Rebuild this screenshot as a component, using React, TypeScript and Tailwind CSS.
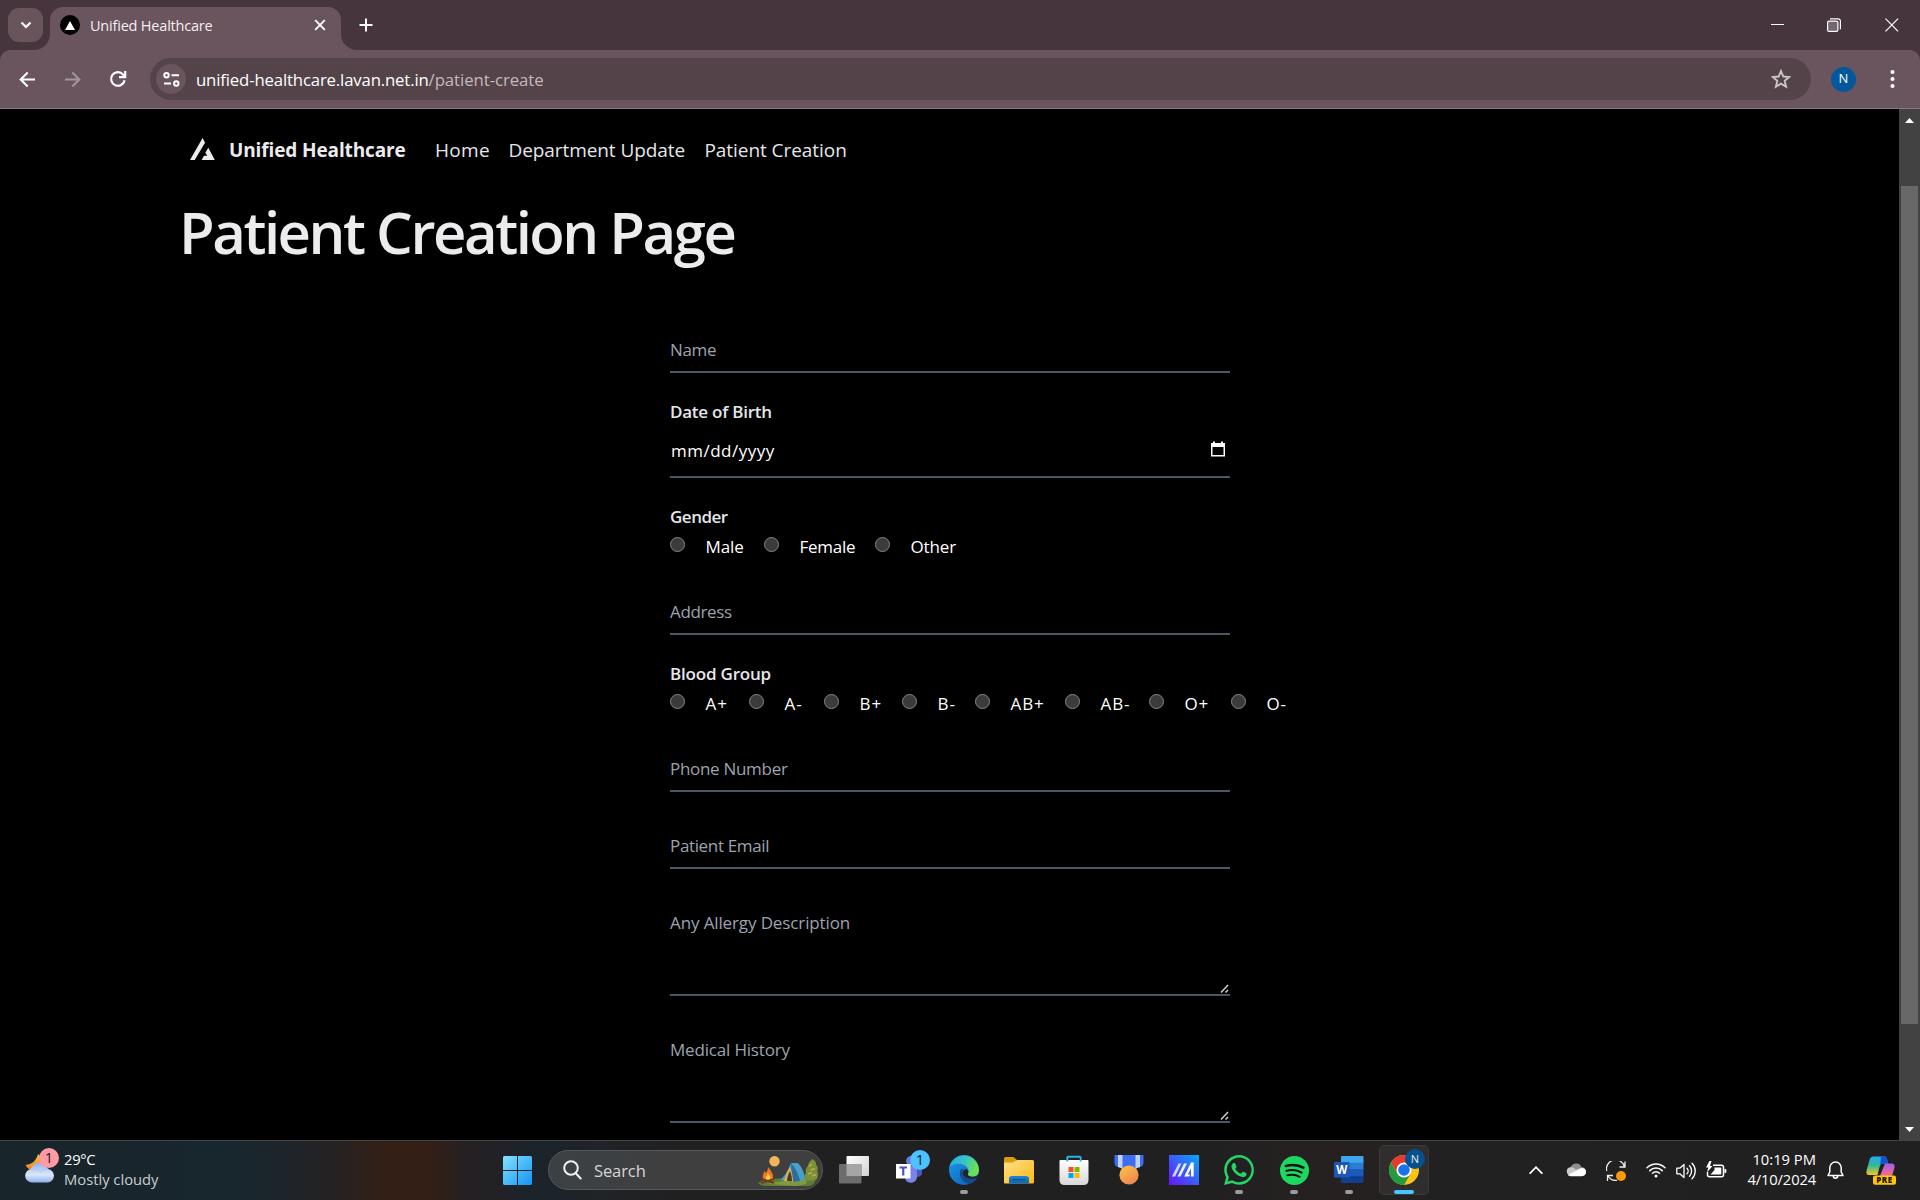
import React from "react";

function TabStrip() {
  return (
    <div className="flex h-[50px] shrink-0 bg-[#46353c]">
      <button className="mt-2 ml-2 flex h-[34px] w-[35px] items-center justify-center rounded-[11px] bg-[#6a545c]">
        <svg width="12" height="8" viewBox="0 0 12 8" fill="none" stroke="#fff" strokeWidth="2.2">
          <path d="M1.5 1.5 6 6l4.500-4.500" />
        </svg>
      </button>
      <div className="-ml-[9px] flex h-[50px] items-end">
        <svg width="16" height="16" viewBox="0 0 16 16" className="shrink-0">
          <path d="M0 16A16 16 0 0 0 16 0V16Z" fill="#6a545d" />
        </svg>
        <div className="flex h-[43px] w-[291px] items-center rounded-t-[13px] bg-[#6a545d] pb-[7px] pl-[10px]">
          <div className="flex size-5 items-center justify-center rounded-full bg-black">
            <svg width="10" height="9" viewBox="0 0 10 9">
              <path d="M5 0 10 9H0Z" fill="#fff" />
            </svg>
          </div>
          <span className="mt-[2px] ml-[10px] text-[14.500px] leading-5 tracking-[-0.200px] text-[#f5eef1]">Unified Healthcare</span>
          <svg className="mr-[15px] ml-auto" width="12" height="12" viewBox="0 0 12 12" stroke="#fff" strokeWidth="1.900">
            <path d="m1.200 1.200 9.600 9.600M10.800 1.200l-9.600 9.600" />
          </svg>
        </div>
        <svg width="16" height="16" viewBox="0 0 16 16" className="shrink-0">
          <path d="M16 16A16 16 0 0 1 0 0V16Z" fill="#6a545d" />
        </svg>
      </div>
      <svg className="mt-[18px] ml-[1.500px]" width="14" height="14" viewBox="0 0 14 14" stroke="#fff" strokeWidth="2">
        <path d="M7 0.500v13M0.500 7h13" />
      </svg>
      <div className="ml-auto flex h-[49px] items-center">
        <svg className="w-[57px]" height="14" viewBox="0 0 57 14">
          <path d="M22 6.500h13" stroke="#fff" strokeWidth="1" />
        </svg>
        <svg className="w-[57px]" height="14" viewBox="0 0 57 14" fill="none" stroke="#fff" strokeWidth="1.200">
          <rect x="21.600" y="3.100" width="10.300" height="10.300" rx="1.500" fill="#fff" fillOpacity="0.250" />
          <path d="M24 .8h8a2.400 2.400 0 0 1 2.400 2.400v8" />
        </svg>
        <svg className="w-[57px]" height="14" viewBox="0 0 57 14" stroke="#fff" strokeWidth="1.200">
          <path d="m22.500.700 12.600 12.600M35.100.700 22.500 13.300" />
        </svg>
      </div>
    </div>
  );
}

function Toolbar() {
  return (
    <div className="shrink-0 bg-[#46353c]">
      <div className="flex h-[59px] items-center rounded-t-[10px] border-b border-[#8a7680] bg-[#6a545d] pl-[5px]">
        <div className="flex w-[45px] justify-center">
          <svg width="17" height="17" viewBox="0 0 17 17" fill="none" stroke="#fff" strokeWidth="2.100">
            <path d="M16 8.500H2M8.700 1.500l-7 7 7 7" />
          </svg>
        </div>
        <div className="flex w-[45px] justify-center">
          <svg width="17" height="17" viewBox="0 0 17 17" fill="none" stroke="#a3959b" strokeWidth="2.100">
            <path d="M1 8.500h14M8.300 1.500l7 7-7 7" />
          </svg>
        </div>
        <div className="flex w-[45px] justify-center">
          <svg width="18" height="18" viewBox="0 0 18 18" fill="none" stroke="#fff" strokeWidth="2.200">
            <path d="M15.600 10.200A6.800 6.800 0 1 1 14 4.400l1.800 1.900" />
            <path d="M16.200 1v6.200H10" />
          </svg>
        </div>
        <div className="ml-[10px] flex h-[42px] w-[1661px] items-center rounded-full bg-[#54444a] pr-[20px] pl-[6px]">
          <div className="flex size-[30px] items-center justify-center rounded-full bg-[#6a545d]">
            <svg width="17" height="15" viewBox="0 0 17 15" fill="none" stroke="#fff" strokeWidth="2">
              <circle cx="3.500" cy="3.300" r="2.200" />
              <path d="M8.500 3.300H16M1 11.500h7" />
              <circle cx="13.300" cy="11.500" r="2.200" />
            </svg>
          </div>
          <div className="mt-[1px] ml-[10px] text-[16.750px] leading-6">
            <span className="tracking-[-0.160px] text-white">unified-healthcare.lavan.net.in</span>
            <span className="tracking-[-0.060px] text-[#c3b9bd]">/patient-create</span>
          </div>
          <svg className="ml-auto" width="20" height="20" viewBox="0 0 20 20" fill="none" stroke="#c9c4c6" strokeWidth="1.900">
            <path d="m10 2 2.300 5.500 5.900.5-4.500 3.900 1.400 5.800L10 14.600l-5.100 3.100 1.400-5.800L1.800 8l5.900-.5Z" />
          </svg>
        </div>
        <div className="ml-5 flex size-[25px] items-center justify-center rounded-full bg-[#04579b] text-[13px] text-white">N</div>
        <svg className="ml-[33px]" width="7" height="18" viewBox="0 0 7 18" fill="#fff">
          <circle cx="3.500" cy="2" r="2" />
          <circle cx="3.500" cy="9" r="2" />
          <circle cx="3.500" cy="16" r="2" />
        </svg>
      </div>
    </div>
  );
}

function Nav() {
  return (
    <nav className="flex h-[81px] items-center pl-[190px] text-[19px] leading-[30px] text-[#e6e7e9]">
      <svg className="-mt-[2px]" width="25" height="22" viewBox="0 0 25 22" fill="#ececee">
        <path d="M12.600 0 15 4.700 4.700 22H0Z" />
        <path d="m18.300 9.700 6.500 12.300H11.600l2.400-4.200h3.300l-2-3.100Z" />
      </svg>
      <span className="ml-[14px] w-[206px] font-bold tracking-[-0.120px] whitespace-nowrap text-[#ececee]">Unified Healthcare</span>
      <span className="w-[73.500px] tracking-[0.300px]">Home</span>
      <span className="w-[196px] tracking-[-0.080px] whitespace-nowrap">Department Update</span>
      <span className="tracking-[-0.060px]">Patient Creation</span>
    </nav>
  );
}

function Line({ label, className }: { label: string; className: string }) {
  return (
    <div className={"w-[560px] border-b-2 border-[#4b5563] pb-2 leading-[27px] text-[#9ca3af] " + className}>{label}</div>
  );
}

function Area({ label, className }: { label: string; className: string }) {
  return (
    <div className={"mt-10 flex h-[87px] w-[560px] items-end justify-between border-b-2 border-[#4b5563] " + className}>
      <span className="self-start leading-[27px] text-[#9ca3af]">{label}</span>
      <svg className="mr-[1px] mb-[1px]" width="9" height="9" viewBox="0 0 9 9" stroke="#d0d0d0" strokeWidth="1.500">
        <path d="M1 8.500 8 1M5.500 8.500 8 6" />
      </svg>
    </div>
  );
}

function Choice({ label, className }: { label: string; className: string }) {
  return (
    <label className={"flex h-[25px] " + className}>
      <span className="mt-[3px] size-[15px] shrink-0 rounded-full border border-[#858585] bg-[#3b3b3b]" />
      <span className="ml-[20.500px] leading-[25px] whitespace-nowrap text-white">{label}</span>
    </label>
  );
}

function PatientForm() {
  return (
    <form className="ml-[670px] flex w-[660px] flex-col pt-[62px] text-[17px] tracking-[-0.120px]">
      <Line label="Name" className="tracking-[-0.350px]" />
      <div className="mt-[25px] h-[25px] leading-[27px] font-semibold tracking-[-0.250px] text-[#e5e7eb]">Date of Birth</div>
      <div className="flex h-[55px] w-[560px] justify-between border-b-2 border-[#4b5563] pt-[14px] pr-[5px] pl-[1px] text-white">
        <span className="leading-[27px] tracking-[0.500px]">mm/dd/yyyy</span>
        <svg className="mt-[4px]" width="14" height="16" viewBox="0 0 14 16">
          <path d="M0 2h2V.5h2V2h6V.5h2V2h2v13.500H0Zm1.500 4v8h11V6Z" fill="#fff" fillRule="evenodd" />
        </svg>
      </div>
      <div className="mt-[25px] h-[25px] leading-[27px] font-semibold tracking-[-0.500px] text-[#e5e7eb]">Gender</div>
      <div className="mt-[6px] flex">
        <Choice label="Male" className="w-[94px]" />
        <Choice label="Female" className="w-[111px] tracking-[-0.250px]" />
        <Choice label="Other" className="" />
      </div>
      <Line label="Address" className="mt-[39px] tracking-[-0.350px]" />
      <div className="mt-[25px] h-[25px] leading-[27px] font-semibold tracking-[-0.200px] text-[#e5e7eb]">Blood Group</div>
      <div className="mt-[6px] flex tracking-[0.900px]">
        <Choice label="A+" className="w-[79px]" />
        <Choice label="A-" className="w-[75px]" />
        <Choice label="B+" className="w-[78px]" />
        <Choice label="B-" className="w-[73px]" />
        <Choice label="AB+" className="w-[90px]" />
        <Choice label="AB-" className="w-[84px]" />
        <Choice label="O+" className="w-[82px]" />
        <Choice label="O-" className="w-[60px]" />
      </div>
      <Line label="Phone Number" className="mt-[39px] tracking-[-0.300px]" />
      <Line label="Patient Email" className="mt-10 tracking-[-0.350px]" />
      <Area label="Any Allergy Description" className="" />
      <Area label="Medical History" className="tracking-[-0.180px]" />
    </form>
  );
}

function Scrollbar() {
  return (
    <div className="flex w-[21px] shrink-0 flex-col items-center bg-[#424242]">
      <svg className="mt-[9px]" width="9" height="5" viewBox="0 0 9 5">
        <path d="M4.500 0 9 5H0Z" fill="#fff" />
      </svg>
      <div className="mt-[63px] h-[838px] w-[17px] bg-[#686868]" />
      <svg className="mt-auto mb-[8px]" width="9" height="5" viewBox="0 0 9 5">
        <path d="M4.500 5 9 0H0Z" fill="#fff" />
      </svg>
    </div>
  );
}

function WeatherIcon() {
  return (
    <svg width="34" height="38" viewBox="0 0 34 38">
      <defs>
        <linearGradient id="cloud" x2="0" y2="1">
          <stop stopColor="#8fb2f2" />
          <stop offset="0.600" stopColor="#dbe7fa" />
          <stop offset="1" stopColor="#8eb0ef" />
        </linearGradient>
        <linearGradient id="moon" x2="0" y2="1">
          <stop stopColor="#f6c343" />
          <stop offset="1" stopColor="#f0811f" />
        </linearGradient>
      </defs>
      <path d="M13 7c-1.500 6-5 10-12.500 11C3 23.500 10 25 15 21c4-3.500 2-11-2-14Z" fill="url(#moon)" />
      <path d="M7 35.500a7 6.800 0 0 1-1-13.500 9 9 0 0 1 17 0 6.800 6.800 0 0 1 0 13.500Z" fill="url(#cloud)" />
      <path d="M6 22c5-1 8 1 9.500 3.500C17 23 20 21.500 23.500 22" fill="none" stroke="#a9c4f5" />
      <circle cx="24" cy="11" r="10" fill="#ff9aa5" />
      <text x="24" y="16.200" textAnchor="middle" fontSize="14.500" fill="#20181a" className="font-['Open_Sans']">1</text>
    </svg>
  );
}

function CampIcon() {
  return (
    <svg width="61" height="31" viewBox="0 0 61 31">
      <path d="M1 27c8-5 22-4 32-5 12-3 21-5 27-3-1 7-4 11-8 11H9c-3 0-6-1-8-3Z" fill="#5c7d33" />
      <path d="M10 28c10-3 25-4 40-4l-1 4-10 2Z" fill="#7f9a3e" />
      <circle cx="17.500" cy="5.300" r="5.200" fill="#f3b558" />
      <path d="M55.500 3c3 2 4 4 3.500 6 2 1 2 4 1.300 6 1 3 .7 6-.3 8-4 2-9 2-12 1-1-3 0-5 1-7-1-3 0-5 2-7 0-3 2-5 4.500-7Z" fill="#7c8f35" />
      <path d="m52 10 3-1.500M54 14l4-1.500M51 18l4-1.500M55 20l4-1.500" fill="none" stroke="#b3b250" strokeWidth="1.400" />
      <path d="m34 7 7 0c4 4 7 11 7 17l-13 2-12-2c5-4 8-9 11-17Z" fill="#4a9fca" />
      <path d="M34 7c5 6 8 12 9 18l-8 1Z" fill="#2b6f9d" />
      <path d="M33 11c-4 6-5 10-6 14l9 1c0-5-1-10-3-15Z" fill="#d9b056" />
      <path d="M33 15c-2 4-3 7-3 10l5 .5c0-4-.5-7-2-10.500Z" fill="#4d3b22" />
      <path d="M11 11c3 4 6 7 5 12-1 3-9 4-10 0-1-4 1-5 1-8l2 2c1-2 2-3 2-6Z" fill="#f4771f" />
      <path d="M11 17c2 3 3 4 2 7h-4c-1-3 1-4 2-7Z" fill="#ffd34f" />
      <path d="m5 23 12 4M17 23 4 27" stroke="#6f3d1d" strokeWidth="2" />
    </svg>
  );
}

function StartIcon() {
  return (
    <svg width="29" height="29" viewBox="0 0 29 29">
      <defs>
        <linearGradient id="win" x2="1" y2="1">
          <stop stopColor="#86e2fd" />
          <stop offset="1" stopColor="#1193f5" />
        </linearGradient>
      </defs>
      <path d="M1 0h13v14H0V1Zm14 0h13l1 1v13H15ZM0 15h14v14H1l-1-1Zm15 0h14v13l-1 1H15Z" fill="url(#win)" />
    </svg>
  );
}

function TaskViewIcon() {
  return (
    <svg width="30" height="30" viewBox="0 0 30 30">
      <defs>
        <linearGradient id="tv" x2="1" y2="1">
          <stop stopColor="#fff" />
          <stop offset="1" stopColor="#d2d2d2" />
        </linearGradient>
      </defs>
      <rect x="7.500" y="1" width="22.500" height="20" rx="1" fill="url(#tv)" />
      <rect x="0" y="9" width="22.500" height="19.500" rx="1" fill="#6d6d6d" />
      <rect x="7.500" y="9" width="15" height="12" fill="#a5a5a5" />
    </svg>
  );
}

function TeamsIcon() {
  return (
    <svg width="38" height="38" viewBox="0 0 38 38" className="-mt-[4px] ml-[9px] shrink-0">
      <path d="M21 14h6v11a5.500 5.500 0 0 1-5 3Z" fill="#4d55bd" />
      <circle cx="16" cy="12" r="5" fill="#6c74dd" />
      <path d="M11 15h11v12a6.300 6.300 0 0 1-11.500 4Z" fill="#7b83eb" />
      <rect x="1" y="15" width="14.500" height="14.500" fill="#fff" />
      <path d="M4.500 18.500h7.500M8.250 18.500v8" stroke="#4b53bc" strokeWidth="2.200" />
      <circle cx="25" cy="11" r="10" fill="#4cc2ff" />
      <text x="25" y="16.200" textAnchor="middle" fontSize="14.500" fill="#12242f" className="font-['Open_Sans']">1</text>
    </svg>
  );
}

function EdgeIcon() {
  return (
    <svg width="30" height="30" viewBox="0 0 30 30">
      <defs>
        <linearGradient id="eg1" x2="1" y2="0.300">
          <stop stopColor="#2aa8e0" />
          <stop offset="0.500" stopColor="#35c1d0" />
          <stop offset="1" stopColor="#6be24f" />
        </linearGradient>
        <linearGradient id="eg2" x2="0.800" y2="1">
          <stop stopColor="#1f9be8" />
          <stop offset="1" stopColor="#0a63c0" />
        </linearGradient>
      </defs>
      <circle cx="15" cy="15" r="15" fill="url(#eg2)" />
      <path d="M.4 12A15 15 0 0 1 30 15c0 5-4 7.500-8.500 6.500-2.500-.6-3.200-1.500-2.700-2.700.7-1.200 1-2 .8-3.300C19 11 14 8.500 9 8.700 5 9 2 10 .4 12Z" fill="url(#eg1)" />
      <path d="M12 14c-3 5 0 13 8 15 4-1 7-4 8.500-7-5 3-14 1-15-5-.2-1.300.2-2.300.8-3.300Z" fill="#124c8d" />
      <path d="M19 18.800c-.6 1.200.2 2.100 2.700 2.700 3 .7 5.600-.1 7.100-1.500l-.6 2.300c-4 2.600-11 1.700-13.500-1.800-1.800-2.500-1-5.500 1.600-6.300 2.300-.3 3.900 2 2.700 4.600Z" fill="#232426" />
    </svg>
  );
}

function FolderIcon() {
  return (
    <svg width="30" height="30" viewBox="0 0 30 30">
      <defs>
        <linearGradient id="fd" x2="1" y2="1">
          <stop stopColor="#ffe08a" />
          <stop offset="1" stopColor="#fbb917" />
        </linearGradient>
        <linearGradient id="fb" x2="0" y2="1">
          <stop stopColor="#1b87cf" />
          <stop offset="1" stopColor="#0c66b3" />
        </linearGradient>
      </defs>
      <path d="M0 3.500Q0 2 1.500 2h8l3 2.500V9H0Z" fill="#dc9c0a" />
      <path d="M0 7.500h9l4-2.500h15.500Q30 5 30 6.500v21q0 1-1 1H1q-1 0-1-1Z" fill="url(#fd)" />
      <path d="M5 28.500V24q0-3 3-3h14q3 0 3 3v4.500Z" fill="url(#fb)" />
      <path d="M8.500 24.700h13" stroke="#0b4f8c" strokeWidth="1.400" />
    </svg>
  );
}

function StoreIcon() {
  return (
    <svg width="30" height="30" viewBox="0 0 30 30">
      <defs>
        <linearGradient id="st" x2="0" y2="1">
          <stop stopColor="#fff" />
          <stop offset="1" stopColor="#d8d8d8" />
        </linearGradient>
      </defs>
      <path d="M.5 6q0-1 1-1h27q1 0 1 1v19q0 5-5 5h-19q-5 0-5-5Z" fill="url(#st)" />
      <path d="M8.300 6.500V2.700q0-1 1-1h11.400q1 0 1 1v3.800" fill="none" stroke="#28b4e8" strokeWidth="1.900" />
      <path d="M9.500 12H14.500v5H9.500Z" fill="#f25022" />
      <path d="M15.500 12h5v5h-5Z" fill="#7fba00" />
      <path d="M9.500 18h5v5h-5Z" fill="#00a4ef" />
      <path d="M15.500 18h5v5h-5Z" fill="#ffb900" />
    </svg>
  );
}

function MedalIcon() {
  return (
    <svg width="30" height="30" viewBox="0 0 30 30">
      <defs>
        <linearGradient id="md" x2="0.700" y2="1">
          <stop stopColor="#ffc845" />
          <stop offset="1" stopColor="#ee8350" />
        </linearGradient>
      </defs>
      <path d="M.5 0h29v7c0 3-1 4-3.500 5l-4 1.500H8L4 12C1.500 11 .5 10 .5 7Z" fill="#3f6df0" />
      <path d="M4 0h4.500v13.500L4 12ZM21.500 0H26v12l-4.500 1.500Z" fill="#bcd2fb" />
      <circle cx="15" cy="20" r="9.600" fill="url(#md)" />
    </svg>
  );
}

function AsusIcon() {
  return (
    <svg width="30" height="30" viewBox="0 0 30 30">
      <defs>
        <linearGradient id="as" x1="0" y1="1" x2="1" y2="0">
          <stop stopColor="#6a14f5" />
          <stop offset="0.500" stopColor="#3b5cfb" />
          <stop offset="1" stopColor="#03a9fc" />
        </linearGradient>
      </defs>
      <path d="M0 0h30v30H0Z" fill="url(#as)" />
      <path d="M3 21.500 9.500 8.500h3L6 21.500Z" fill="#cfd5fb" />
      <path d="M8.500 21.500 15 8.500h3l-6.500 13Z" fill="#e8edff" />
      <path d="M22 7.500h2.700v14H22v-8l-3.300 6h2.500l-1 2h-5Z" fill="#fff" />
    </svg>
  );
}

function WhatsAppIcon() {
  return (
    <svg width="30" height="30" viewBox="0 0 24 24" fill="#25d366">
      <path d="M17.472 14.382c-.297-.149-1.758-.867-2.030-.967-.273-.099-.471-.148-.67.150-.197.297-.767.966-.940 1.164-.173.199-.347.223-.644.075-.297-.150-1.255-.463-2.390-1.475-.883-.788-1.480-1.761-1.653-2.059-.173-.297-.018-.458.130-.606.134-.133.298-.347.446-.520.149-.174.198-.298.298-.497.099-.198.050-.371-.025-.520-.075-.149-.669-1.612-.916-2.207-.242-.579-.487-.500-.669-.510-.173-.008-.371-.010-.570-.010-.198 0-.520.074-.792.372-.272.297-1.040 1.016-1.040 2.479 0 1.462 1.065 2.875 1.213 3.074.149.198 2.096 3.200 5.077 4.487.709.306 1.262.489 1.694.625.712.227 1.360.195 1.871.118.571-.085 1.758-.719 2.006-1.413.248-.694.248-1.289.173-1.413-.074-.124-.272-.198-.570-.347" />
      <path d="M12.050 0C5.500 0 .160 5.340.160 11.890c0 2.100.550 4.140 1.590 5.950L.060 24l6.300-1.650a11.880 11.880 0 0 0 5.690 1.450c6.550 0 11.890-5.340 11.890-11.890C23.940 5.340 18.600 0 12.050 0Zm0 21.800c-1.800 0-3.500-.480-5-1.400l-.400-.200-3.700 1 1-3.600-.200-.400a9.880 9.880 0 1 1 8.300 4.600Z" />
    </svg>
  );
}

function SpotifyIcon() {
  return (
    <svg width="29" height="29" viewBox="0 0 29 29" fill="none" strokeLinecap="round" stroke="#111">
      <circle cx="14.500" cy="14.500" r="14.500" fill="#1ed760" stroke="none" />
      <path d="M5.800 10c6-1.700 12.500-1.200 17.600 1.700" strokeWidth="2.600" />
      <path d="M6.500 14.800c5.200-1.400 10.600-.9 15 1.700" strokeWidth="2.200" />
      <path d="M7.200 19.300c4.500-1 8.800-.6 12.600 1.600" strokeWidth="1.800" />
    </svg>
  );
}

function WordIcon() {
  return (
    <svg width="30" height="30" viewBox="0 0 30 30">
      <path d="M7 2q0-1 1-1h20.500q1 0 1 1v6H7Z" fill="#41a5ee" />
      <path d="M7 7.700h22.500v7H7Z" fill="#2b7cd3" />
      <path d="M7 14.700h22.500v7H7Z" fill="#185abd" />
      <path d="M7 21.500h22.500V27q0 1-1 1H8q-1 0-1-1Z" fill="#103f91" />
      <rect x="0" y="7" width="15.500" height="15.500" rx="1.300" fill="#1b57b8" />
      <text x="7.700" y="19" textAnchor="middle" fontSize="11.500" fontWeight="700" fill="#fff" className="font-['Open_Sans']">W</text>
    </svg>
  );
}

function ChromeIcon() {
  return (
    <svg width="38" height="38" viewBox="0 0 38 38" className="-mt-[8px] ml-[8px] shrink-0">
      <circle cx="15" cy="23" r="15" fill="#fbc116" />
      <path d="M2 15.500A15 15 0 0 1 28 15.500L15 16l-6.500 10.700Z" fill="#e33b2e" />
      <path d="M2 15.500A15 15 0 0 0 15 38l6.500-11.200L8.500 26.700Z" fill="#249a41" />
      <circle cx="15" cy="23" r="7.500" fill="#fff" />
      <circle cx="15" cy="23" r="5.800" fill="#1a73e8" />
      <circle cx="26" cy="12" r="10" fill="#07508d" />
      <text x="26" y="16" textAnchor="middle" fontSize="11" fill="#e5edf5" className="font-['Open_Sans']">N</text>
    </svg>
  );
}

function TaskButton({ children, mark, active }: { children: React.ReactNode; mark?: boolean; active?: boolean }) {
  return (
    <div className="flex w-[55px] justify-center">
      <div
        className={
          active
            ? "flex h-[50px] w-[50px] flex-col items-center rounded-[5px] border border-[#3a3838] bg-[#302d2d] pt-[9px]"
            : "flex h-[50px] w-[50px] flex-col items-center pt-[10px]"
        }
      >
        <div className="flex h-[30px] items-center justify-center">{children}</div>
        {mark && <div className="mt-[5px] h-1 w-2 rounded-full bg-[#9b9b9b]" />}
        {active && <div className="mt-[5px] h-1 w-5 shrink-0 rounded-full bg-[#4cc2ff]" />}
      </div>
    </div>
  );
}

function Tray() {
  return (
    <div className="ml-auto flex h-[59px] items-center">
      <svg className="-mt-[1px]" width="14" height="10" viewBox="0 0 14 10" fill="none" stroke="#fff" strokeWidth="1.800" strokeLinecap="round">
        <path d="m1.200 8.200 5.800-6 5.800 6" />
      </svg>
      <svg className="-mt-[1px] ml-[23px]" width="20" height="14" viewBox="0 0 20 14">
        <path d="M4.500 5.200A5.800 5.800 0 0 1 15.500 4L9 9Z" fill="#8f8f8f" />
        <path d="M3.500 12.500A4.300 4.300 0 0 1 4 4.300c3-.5 4.500 1 6 2.500l6-2.500a4.400 4.400 0 0 1 1 8.500Z" fill="#c9c9c9" />
        <path d="M2 12 12.500 6.600c5-3 7.500 0 7.500 2.700 0 2.300-2 3.900-4 3.900H4.500C3.300 13.200 2.500 12.800 2 12Z" fill="#fff" />
      </svg>
      <svg className="ml-5" width="20" height="20" viewBox="0 0 20 20" fill="none" stroke="#eee" strokeWidth="1.300">
        <path d="M.7 10A9 9 0 0 1 18.500 6M19 .5V6h-5.500M11 19.300A9 9 0 0 1 2 15M1.500 20v-5.500H7" />
        <circle cx="15" cy="15" r="5" fill="#f99a0b" stroke="none" />
      </svg>
      <svg className="-mt-[1px] ml-5" width="20" height="16" viewBox="0 0 20 16" fill="none" stroke="#fff" strokeWidth="1.500" strokeLinecap="round">
        <path d="M1 5.800a12.700 12.700 0 0 1 18 0M3.800 8.600a8.800 8.800 0 0 1 12.400 0M6.500 11.300a5 5 0 0 1 7 0" />
        <circle cx="10" cy="14" r="1.500" fill="#fff" stroke="none" />
      </svg>
      <svg className="ml-[10px]" width="20" height="18" viewBox="0 0 20 18" fill="none" stroke="#fff" strokeWidth="1.300" strokeLinecap="round" strokeLinejoin="round">
        <path d="M.8 6.200h3L8 2.500v13l-4.200-3.700h-3ZM11 6.200a4 4 0 0 1 0 5.600M13.500 3.800a7.500 7.500 0 0 1 0 10.400M16 1.200a11 11 0 0 1 0 15.600" />
      </svg>
      <svg className="-mt-[2px] ml-[10px]" width="21" height="17" viewBox="0 0 21 17">
        <path d="M7 4.200h8.500a2 2 0 0 1 2 2v7.600a2 2 0 0 1-2 2H3.500a2 2 0 0 1-2-2V11" fill="none" stroke="#fff" strokeWidth="1.500" />
        <path d="M18.500 8h1q.8 0 .8.800v2.400q0 .8-.8.800h-1ZM8.500 6.500h6q.8 0 .8.800v5.500q0 .8-.8.800h-10l4-4.500Z" fill="#fff" />
        <path d="M3.500 0 0 6.500h2.300L1 11.500 6.500 5H4L5.500 0Z" fill="#fff" />
      </svg>
      <div className="-mt-[4px] ml-[20px] flex w-[69px] flex-col items-end text-[14.750px] leading-5 whitespace-nowrap text-white">
        <span>10:19 PM</span>
        <span className="tracking-[-0.150px]">4/10/2024</span>
      </div>
      <svg className="ml-[11px]" width="17" height="19" viewBox="0 0 17 19" fill="none" stroke="#fff" strokeWidth="1.500" strokeLinejoin="round">
        <path d="M8.500 1A5.700 5.700 0 0 1 14.200 6.700V11l1.800 3.500H1L2.800 11V6.700A5.700 5.700 0 0 1 8.500 1ZM6.300 15a2.200 2.200 0 0 0 4.400 0" />
      </svg>
      <svg className="mr-[24px] ml-[22px]" width="30" height="29" viewBox="0 0 30 29">
        <defs>
          <linearGradient id="cp1" x2="0" y2="1">
            <stop stopColor="#2ba9f0" />
            <stop offset="0.450" stopColor="#29b6a0" />
            <stop offset="1" stopColor="#f3c91c" />
          </linearGradient>
          <linearGradient id="cp2" x2="0" y2="1">
            <stop stopColor="#a45cf0" />
            <stop offset="1" stopColor="#fb6f7b" />
          </linearGradient>
        </defs>
        <path d="M7.500.500H18c2.500 0 3 1.500 4 7h-4.500c-3 0-3.500 2-4.500 5.500L11.500 19H3.500C.5 19 0 17 .7 14l2.800-10c.7-2.200 1.800-3.500 4-3.500Z" fill="url(#cp1)" />
        <path d="M15 .500h3c2.500 0 3 1.500 4 7h-4.500c-2 0-2.500.500-3.300 2Z" fill="#1650d8" />
        <path d="M19 7.500h6c3.500 0 4 2 3.300 5L26 20H14Z" fill="url(#cp2)" />
        <rect x="7" y="19.500" width="23" height="9.300" rx="2" fill="#ffc60a" />
        <text x="18.500" y="27" textAnchor="middle" fontSize="8" fontWeight="800" letterSpacing="0.500" fill="#1b1500" className="font-['Open_Sans']">PRE</text>
      </svg>
    </div>
  );
}

function Taskbar() {
  return (
    <div className="flex h-[60px] shrink-0 border-t border-[#454545] bg-[linear-gradient(90deg,#18252b_0px,#18262d_240px,#1e2429_290px,#272222_340px,#331f15_385px,#331f15_425px,#262022_465px,#1b232b_540px,#202327_600px,#202021_680px,#202021_1180px,#262120_1340px,#212122_1460px,#202021_1920px)]">
      <div className="flex w-[490px] pt-[6px] pl-[25px]">
        <WeatherIcon />
        <div className="mt-[2px] ml-[5px] flex flex-col text-[14.750px] leading-5 whitespace-nowrap">
          <span className="tracking-[-0.300px] text-white">29°C</span>
          <span className="text-[#c9cdcf]">Mostly cloudy</span>
        </div>
      </div>
      <div className="flex w-[55px] justify-center pt-[15px]">
        <StartIcon />
      </div>
      <div className="mt-[9px] ml-[3px] flex h-10 w-[275px] items-center rounded-full border border-[#555759] bg-[linear-gradient(90deg,#3a4145,#3f3f40_40%,#3f3f40)] pr-[4px] pl-[14px]">
        <svg width="19" height="20" viewBox="0 0 19 20" fill="none" stroke="#f0f0f0" strokeWidth="2" strokeLinecap="round">
          <circle cx="8" cy="8" r="6.800" />
          <path d="m13 13.500 4.700 5" />
        </svg>
        <span className="mt-[2px] ml-[12px] text-[16.500px] leading-6 tracking-[-0.100px] text-[#d6d6d6]">Search</span>
        <div className="mt-[3px] ml-auto">
          <CampIcon />
        </div>
      </div>
      <div className="ml-[3.500px] flex pt-1">
        <TaskButton><TaskViewIcon /></TaskButton>
        <TaskButton><TeamsIcon /></TaskButton>
        <TaskButton mark><EdgeIcon /></TaskButton>
        <TaskButton><FolderIcon /></TaskButton>
        <TaskButton><StoreIcon /></TaskButton>
        <TaskButton><MedalIcon /></TaskButton>
        <TaskButton><AsusIcon /></TaskButton>
        <TaskButton mark><WhatsAppIcon /></TaskButton>
        <TaskButton mark><SpotifyIcon /></TaskButton>
        <TaskButton mark><WordIcon /></TaskButton>
        <TaskButton active><ChromeIcon /></TaskButton>
      </div>
      <Tray />
    </div>
  );
}

export default function App() {
  return (
    <div className="flex h-[1200px] w-[1920px] flex-col overflow-hidden bg-black font-['Open_Sans',sans-serif]">
      <TabStrip />
      <Toolbar />
      <div className="flex h-[1031px] shrink-0">
        <main className="flex w-[1899px] shrink-0 flex-col overflow-hidden">
          <Nav />
          <h1 className="pl-[179px] text-[58px] leading-[84px] font-semibold tracking-[-2.450px] text-[#ececee]">Patient Creation Page</h1>
          <PatientForm />
        </main>
        <Scrollbar />
      </div>
      <Taskbar />
    </div>
  );
}
